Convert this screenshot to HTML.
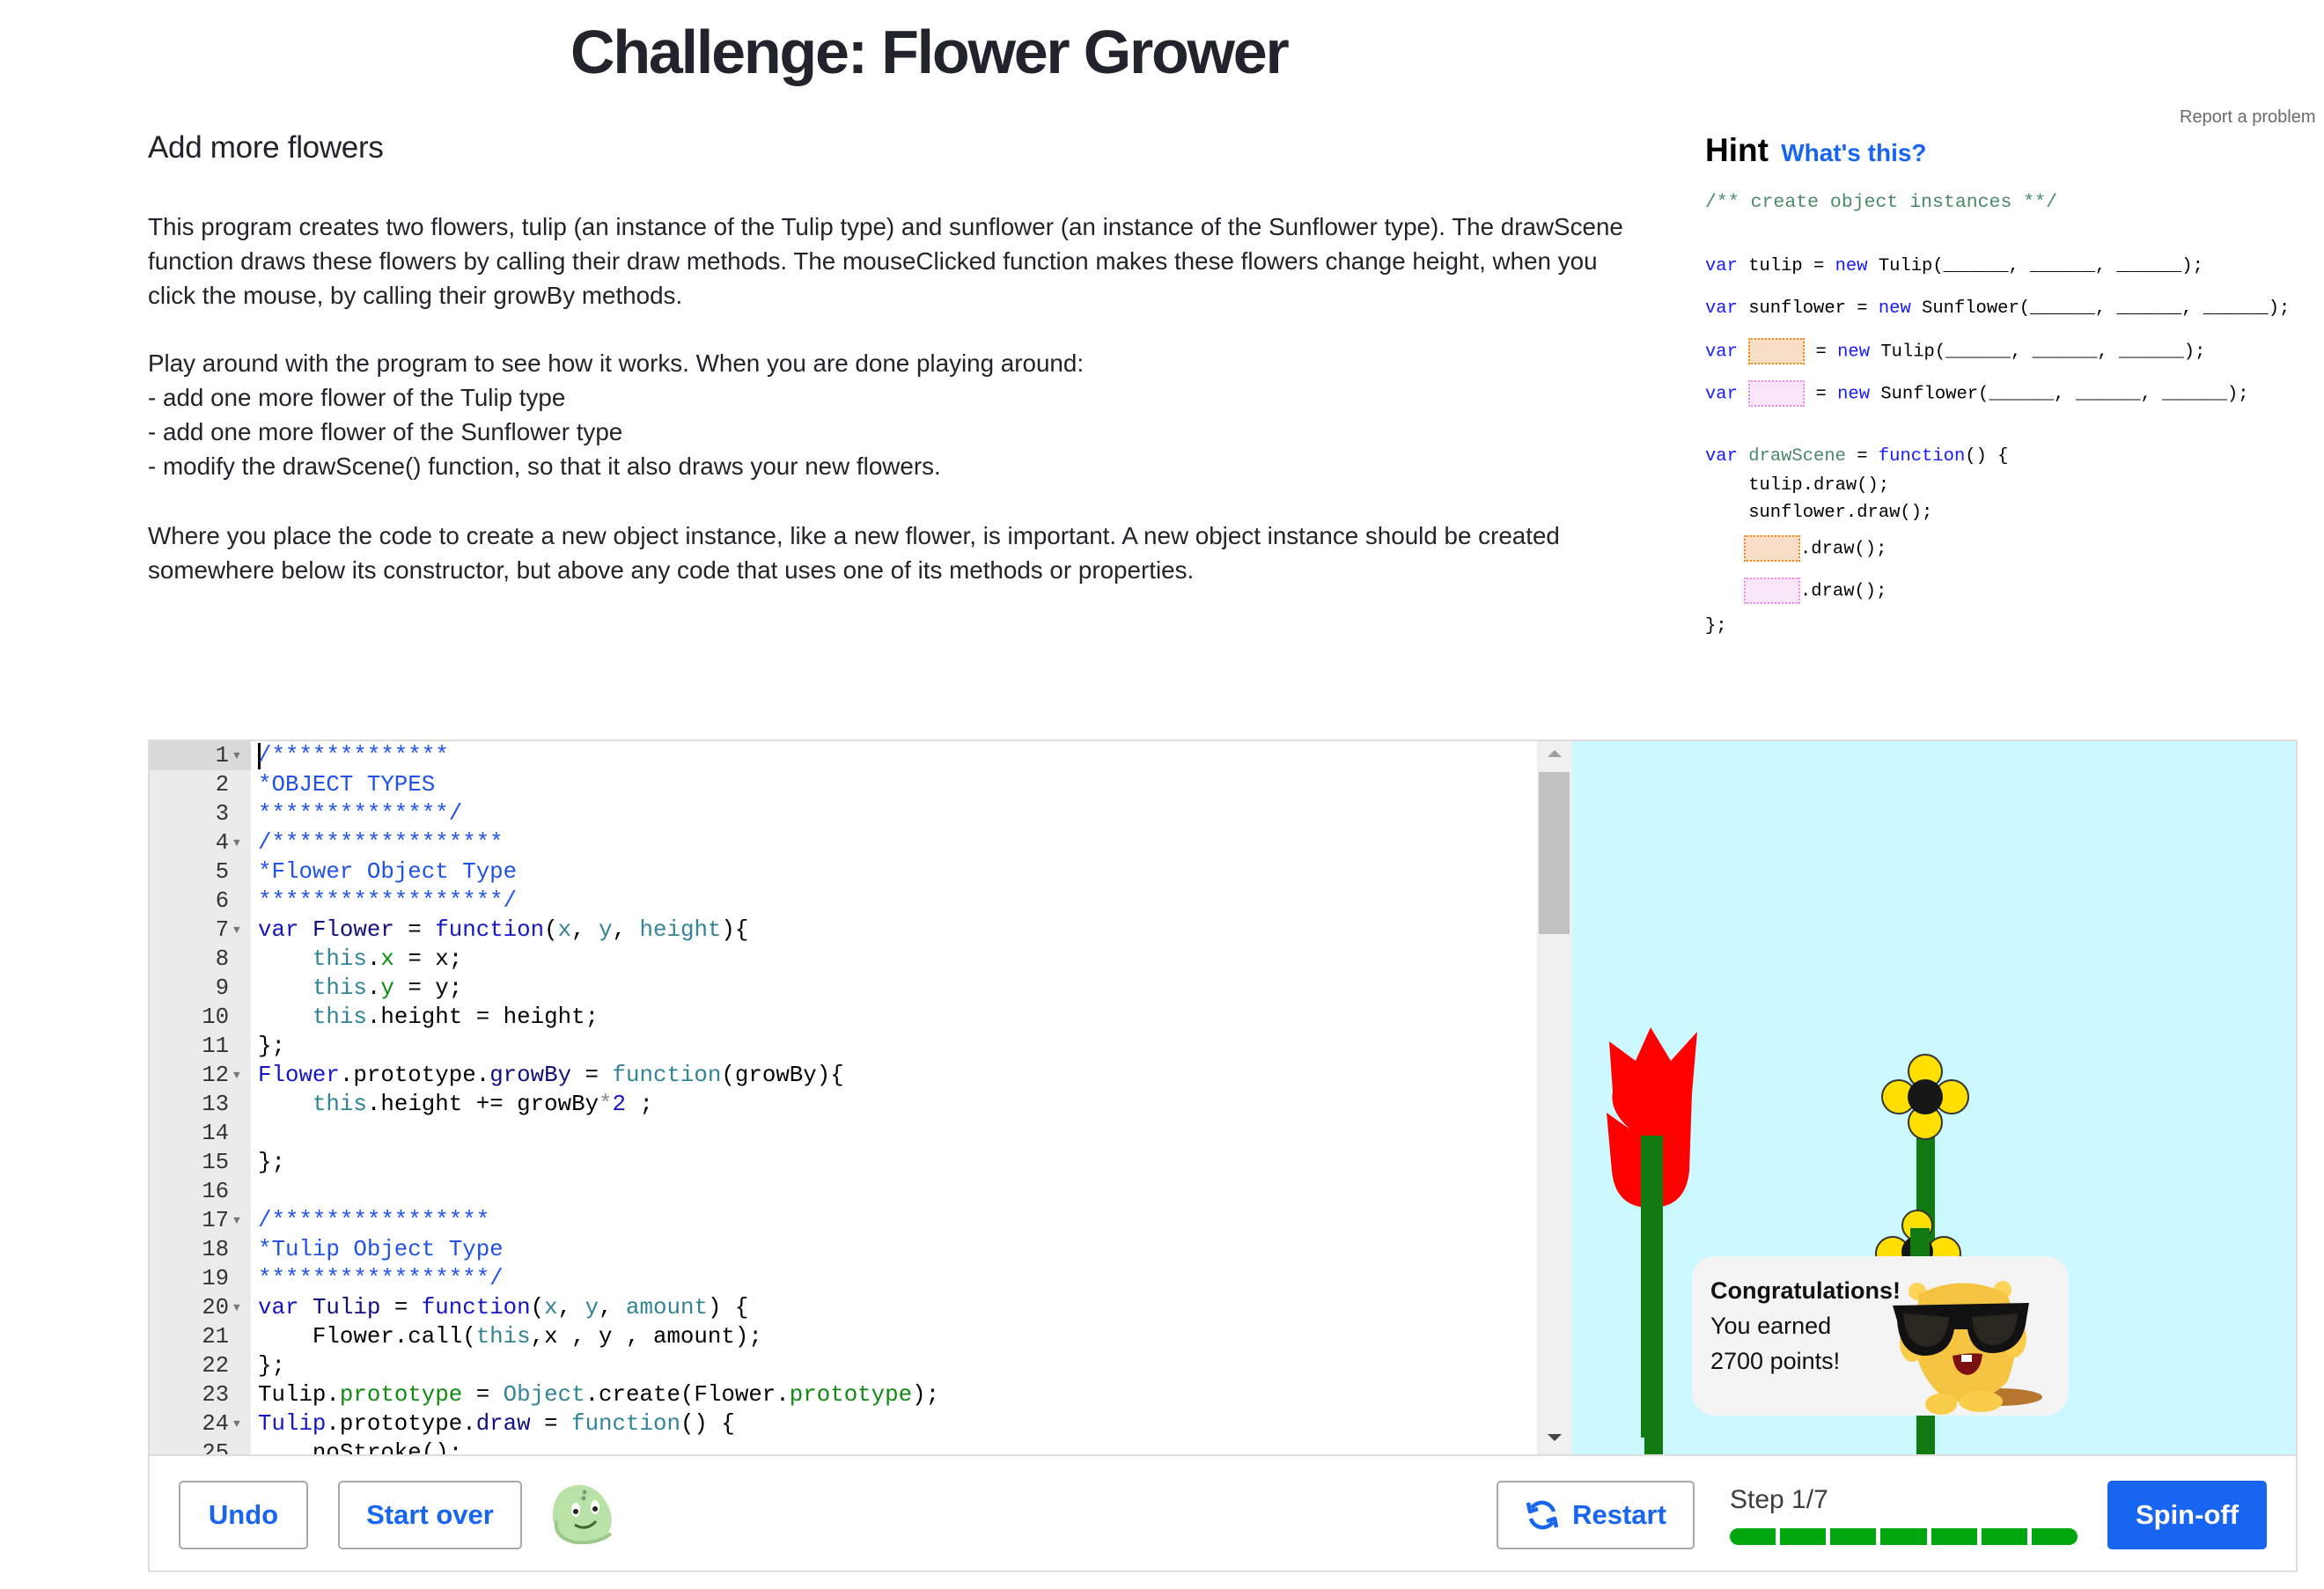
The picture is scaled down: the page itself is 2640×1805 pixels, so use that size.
<!DOCTYPE html>
<html><head><meta charset="utf-8">
<style>
*{margin:0;padding:0;box-sizing:border-box}
body{width:2640px;height:1805px;background:#fff;position:relative;overflow:hidden;font-family:"Liberation Sans",sans-serif;color:#21242c}
.a{position:absolute;white-space:nowrap}
.p{font-size:27.8px;line-height:39px;color:#21242c}
.mono{font-family:"Liberation Mono",monospace}
.hint{font-size:20.5px;color:#000;line-height:30px;white-space:pre}
.kw{color:#1a1aff}
.cm{color:#4b8a68}
.box{display:inline-block;width:64px;height:30px;vertical-align:middle}
.bo{background:#f9dec7;border:2px dotted #f0891c}
.bp{background:#f8e5f8;border:2px dotted #ee8cee}
.code{font-size:25.8px;line-height:33px}
.c{color:#2152e8}
.k{color:#1515c8}
.t{color:#318495}
.g{color:#108a10}
.n{color:#0f0f80}
.btn{position:absolute;border:2px solid #a7a9ad;border-radius:5px;background:#fff;color:#1865f2;font-weight:bold;font-size:31px;display:flex;align-items:center;justify-content:center}
</style></head><body>

<div class="a" style="left:648px;top:14px;font-size:70px;font-weight:bold;letter-spacing:-2.2px;line-height:90px">Challenge: Flower Grower</div>
<div class="a" style="left:168px;top:146px;font-size:35px;line-height:44px;letter-spacing:-0.3px">Add more flowers</div>

<div class="a p" style="left:168px;top:238px">This program creates two flowers, tulip (an instance of the Tulip type) and sunflower (an instance of the Sunflower type). The drawScene<br>function draws these flowers by calling their draw methods. The mouseClicked function makes these flowers change height, when you<br>click the mouse, by calling their growBy methods.</div>
<div class="a p" style="left:168px;top:393px">Play around with the program to see how it works. When you are done playing around:<br>- add one more flower of the Tulip type<br>- add one more flower of the Sunflower type<br>- modify the drawScene() function, so that it also draws your new flowers.</div>
<div class="a p" style="left:168px;top:589px">Where you place the code to create a new object instance, like a new flower, is important. A new object instance should be created<br>somewhere below its constructor, but above any code that uses one of its methods or properties.</div>

<div class="a" style="left:2476px;top:122px;font-size:20px;color:#6b6b6b">Report a problem</div>
<div class="a" style="left:1937px;top:148px;font-size:37px;font-weight:bold;color:#000;line-height:46px">Hint <span style="font-size:28px;color:#1865f2;margin-left:4px">What's this?</span></div>

<div class="a mono hint cm" style="left:1937px;top:215px;font-size:21.5px">/** create object instances **/</div>
<div class="a mono hint" style="left:1937px;top:288px"><span class="kw">var</span> tulip = <span class="kw">new</span> Tulip(______, ______, ______);</div>
<div class="a mono hint" style="left:1937px;top:336px"><span class="kw">var</span> sunflower = <span class="kw">new</span> Sunflower(______, ______, ______);</div>
<div class="a mono hint" style="left:1937px;top:384px"><span class="kw">var</span> <span class="box bo"></span> = <span class="kw">new</span> Tulip(______, ______, ______);</div>
<div class="a mono hint" style="left:1937px;top:432px"><span class="kw">var</span> <span class="box bp"></span> = <span class="kw">new</span> Sunflower(______, ______, ______);</div>
<div class="a mono hint" style="left:1937px;top:504px"><span class="kw">var</span> <span class="cm">drawScene</span> = <span class="kw">function</span>() {</div>
<div class="a mono hint" style="left:1937px;top:537px">    tulip.draw();</div>
<div class="a mono hint" style="left:1937px;top:568px">    sunflower.draw();</div>
<div class="a mono hint" style="left:1981px;top:608px"><span class="box bo"></span>.draw();</div>
<div class="a mono hint" style="left:1981px;top:656px"><span class="box bp"></span>.draw();</div>
<div class="a mono hint" style="left:1937px;top:697px">};</div>

<!-- editor frame -->
<div class="a" style="left:168px;top:840px;width:2442px;height:946px;border:2px solid #ddd"></div>
<div class="a" style="left:170px;top:842px;width:115px;height:810px;background:#ebebeb"></div>
<div class="a" style="left:170px;top:842px;width:115px;height:33px;background:#dadada"></div>
<div class="a" style="left:1746px;top:842px;width:40px;height:810px;background:#f0f0f0"></div>
<div class="a" style="left:1748px;top:877px;width:35px;height:184px;background:#c1c1c1"></div>
<div class="a" style="left:1758px;top:852px;width:0;height:0;border-left:8px solid transparent;border-right:8px solid transparent;border-bottom:8px solid #a0a0a0"></div>
<div class="a" style="left:1758px;top:1629px;width:0;height:0;border-left:8px solid transparent;border-right:8px solid transparent;border-top:8px solid #444"></div>
<div class="a" style="left:170px;top:1652px;width:2438px;height:2px;background:#ddd"></div>

<!-- code -->
<div class="a" style="left:170px;top:842px;width:1576px;height:810px;overflow:hidden">
<div style="position:absolute;left:0;top:0;width:100%" class="mono">
<div style="position:absolute;left:0;top:0;width:90px;text-align:right;font-size:25.5px;line-height:33px;color:#333">1<br>2<br>3<br>4<br>5<br>6<br>7<br>8<br>9<br>10<br>11<br>12<br>13<br>14<br>15<br>16<br>17<br>18<br>19<br>20<br>21<br>22<br>23<br>24<br>25</div>
<div style="position:absolute;left:95px;top:0;font-size:13px;line-height:33px;color:#777">▼<br><br><br>▼<br><br><br>▼<br><br><br><br><br>▼<br><br><br><br><br>▼<br><br><br>▼<br><br><br><br>▼</div>
<div style="position:absolute;left:123px;top:2px;width:3px;height:30px;background:#000"></div>
<pre class="code mono" style="position:absolute;left:123px;top:0;color:#000;font-family:'Liberation Mono',monospace"><span class="c">/*************</span>
<span class="c">*OBJECT TYPES</span>
<span class="c">**************/</span>
<span class="c">/*****************</span>
<span class="c">*Flower Object Type</span>
<span class="c">******************/</span>
<span class="k">var</span> <span class="n">Flower</span> = <span class="k">function</span>(<span class="t">x</span>, <span class="t">y</span>, <span class="t">height</span>){
    <span class="t">this</span>.<span class="g">x</span> = x;
    <span class="t">this</span>.<span class="g">y</span> = y;
    <span class="t">this</span>.height = height;
};
<span class="k">Flower</span>.prototype.<span class="n">growBy</span> = <span class="t">function</span>(growBy){
    <span class="t">this</span>.height += growBy<span style="color:#888">*</span><span class="k">2</span> ;

};

<span class="c">/****************</span>
<span class="c">*Tulip Object Type</span>
<span class="c">*****************/</span>
<span class="k">var</span> <span class="n">Tulip</span> = <span class="k">function</span>(<span class="t">x</span>, <span class="t">y</span>, <span class="t">amount</span>) {
    Flower.call(<span class="t">this</span>,x , y , amount);
};
Tulip.<span class="g">prototype</span> = <span class="t">Object</span>.create(Flower.<span class="g">prototype</span>);
<span class="k">Tulip</span>.prototype.<span class="n">draw</span> = <span class="t">function</span>() {
    noStroke();</pre>
</div></div>

<!-- canvas -->
<svg class="a" style="left:0;top:0" width="2640" height="1805" viewBox="0 0 2640 1805">
<rect x="1786" y="842" width="822" height="810" fill="#ccf8ff"/>
<path d="M1828,1183 L1858,1205 L1875,1167 L1898,1205 L1928,1172 L1922,1242 L1919,1330 Q1915,1372 1875,1372 Q1835,1372 1831,1330 L1825,1264 L1852,1283 Q1828,1262 1832,1240 Z" fill="#ff0000"/>
<rect x="1864" y="1290" width="25" height="343" fill="#117a11"/>
<rect x="1868" y="1620" width="21" height="32" fill="#117a11"/>
<rect x="2177" y="1268" width="21" height="384" fill="#117a11"/>
<g fill="#ffdf00" stroke="#333" stroke-width="2">
<circle cx="2187" cy="1217" r="19"/><circle cx="2187" cy="1275" r="19"/><circle cx="2157" cy="1246" r="19"/><circle cx="2217" cy="1246" r="19"/>
<circle cx="2178" cy="1392" r="17"/><circle cx="2150" cy="1424" r="19"/><circle cx="2208" cy="1424" r="19"/>
</g>
<circle cx="2187" cy="1246" r="20" fill="#161616"/>
<circle cx="2178" cy="1422" r="18" fill="#161616"/>
<rect x="2170" y="1395" width="22" height="40" fill="#117a11"/>
</svg>

<!-- congrats card -->
<div class="a" style="left:1922px;top:1427px;width:428px;height:181px;background:#f4f4f4;border-radius:26px"></div>
<div class="a" style="left:1943px;top:1446px;font-size:27px;line-height:40px;color:#111"><b>Congratulations!</b><br>You earned<br>2700 points!</div>
<svg class="a" style="left:2150px;top:1440px" width="170" height="175" viewBox="0 0 170 175">
<ellipse cx="120" cy="147" rx="50" ry="10" fill="#b87530"/>
<circle cx="28" cy="27" r="10" fill="#fdd35a"/><circle cx="125" cy="25" r="10" fill="#fdd35a"/>
<path d="M30,30 Q80,5 130,30 Q150,80 130,130 Q100,160 60,150 Q25,120 25,80 Z" fill="#f4c440"/>
<ellipse cx="22" cy="85" rx="14" ry="22" fill="#f9cd4a"/><ellipse cx="138" cy="80" rx="14" ry="22" fill="#f9cd4a"/>
<ellipse cx="55" cy="155" rx="18" ry="12" fill="#f9cd4a"/><ellipse cx="100" cy="152" rx="25" ry="12" fill="#f9cd4a"/>
<path d="M0,43 L155,40 L152,58 Q148,95 115,97 Q90,98 85,70 L70,70 Q65,100 35,100 Q8,98 5,60 Z" fill="#111"/>
<path d="M12,52 Q15,88 38,90 Q62,88 64,56 Z M90,56 Q92,88 115,88 Q140,86 142,52 Z" fill="#2a2620"/>
<path d="M68,100 Q88,96 102,98 Q100,120 85,122 Q70,120 68,100 Z" fill="#7a1010"/>
<rect x="78" y="99" width="12" height="8" fill="#fff"/>
</svg>

<!-- bottom buttons -->
<div class="btn" style="left:203px;top:1682px;width:147px;height:78px">Undo</div>
<div class="btn" style="left:384px;top:1682px;width:209px;height:78px">Start over</div>
<svg class="a" style="left:624px;top:1682px" width="78" height="72" viewBox="0 0 78 72">
<path d="M20,8 Q45,-2 62,20 Q78,45 65,62 Q45,75 20,65 Q2,55 4,35 Q6,15 20,8 Z" fill="#b9e2a7"/>
<path d="M8,45 Q5,65 30,70 Q55,72 70,60" fill="none" stroke="#9cc98b" stroke-width="4"/>
<ellipse cx="30" cy="33" rx="5" ry="8" fill="#fff"/><ellipse cx="52" cy="30" rx="5" ry="8" fill="#fff"/>
<circle cx="30" cy="35" r="3" fill="#222"/><circle cx="52" cy="32" r="3" fill="#222"/>
<path d="M29,50 Q42,58 53,46" fill="none" stroke="#3c6a30" stroke-width="3"/>
<circle cx="40" cy="13" r="2.5" fill="#7a9a70"/><circle cx="39" cy="20" r="2.5" fill="#7a9a70"/>
</svg>

<div class="btn" style="left:1700px;top:1682px;width:225px;height:78px;font-weight:600"><svg width="40" height="40" viewBox="0 0 40 40" style="margin-right:14px"><path d="M33,16 A14,14 0 0 0 8,12" fill="none" stroke="#1865f2" stroke-width="4.5"/><path d="M4,6 L6,16 L15,13" fill="none" stroke="#1865f2" stroke-width="4.5" stroke-linejoin="round"/><path d="M7,24 A14,14 0 0 0 32,28" fill="none" stroke="#1865f2" stroke-width="4.5"/><path d="M36,34 L34,24 L25,27" fill="none" stroke="#1865f2" stroke-width="4.5" stroke-linejoin="round"/></svg>Restart</div>

<div class="a" style="left:1965px;top:1684px;font-size:30px;color:#3b3e40;line-height:40px">Step 1/7</div>
<div class="a" style="left:1965px;top:1736px;width:395px;height:19px;display:flex;gap:5px">
<div style="flex:1;background:#00a60e;border-radius:10px 0 0 10px"></div><div style="flex:1;background:#00a60e"></div><div style="flex:1;background:#00a60e"></div><div style="flex:1;background:#00a60e"></div><div style="flex:1;background:#00a60e"></div><div style="flex:1;background:#00a60e"></div><div style="flex:1;background:#00a60e;border-radius:0 10px 10px 0"></div>
</div>
<div class="btn" style="left:2394px;top:1682px;width:181px;height:78px;background:#1865f2;border-color:#1865f2;color:#fff">Spin-off</div>

</body></html>
